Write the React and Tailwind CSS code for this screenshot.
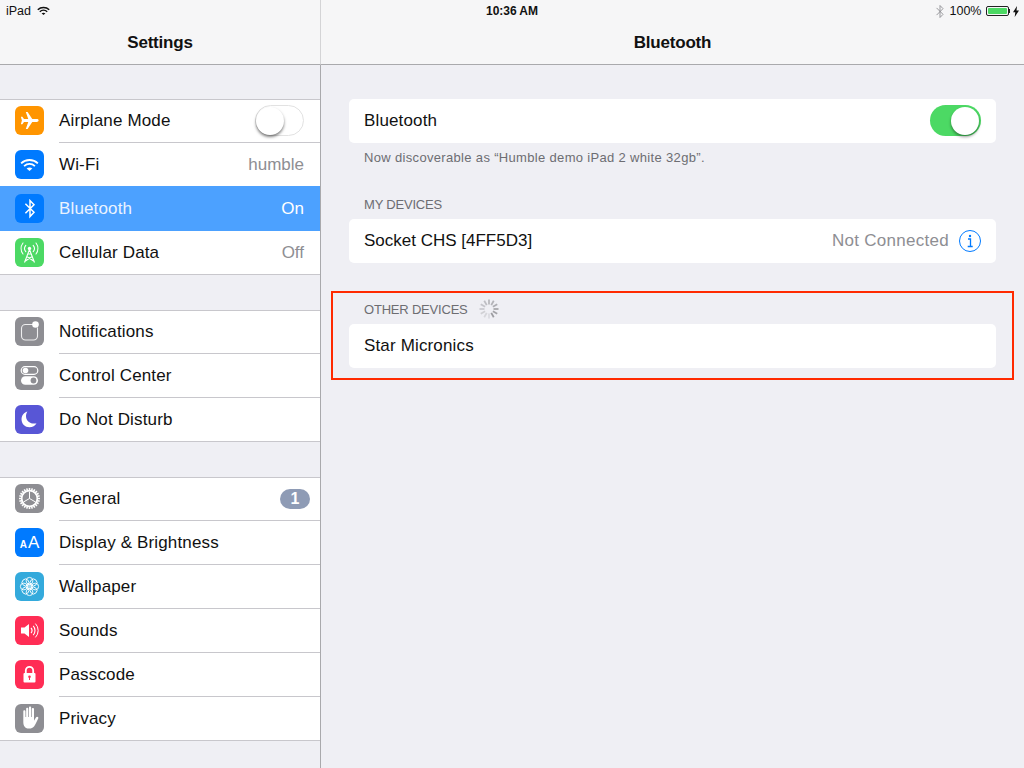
import React from "react";

const Wifi = ({ className, color = "#fff", w = 1.9 }) => (
  <svg className={className} viewBox="0 0 20 14" fill="none" stroke={color} strokeLinecap="butt">
    <path d="M1.200 5.200C6 .6 14 .6 18.800 5.200" strokeWidth={w} />
    <path d="M4.300 8.100C7.600 5.100 12.400 5.100 15.700 8.100" strokeWidth={w} />
    <path d="M10 13.200 7 10.600C8.700 9.300 11.300 9.300 13 10.600Z" fill={color} stroke="none" />
  </svg>
);

const BluetoothGlyph = ({ className, color = "#fff", w = 1.5 }) => (
  <svg className={className} viewBox="0 0 12 20" fill="none" stroke={color} strokeWidth={w}>
    <path d="M1.400 5.200 10 13.800 6 18V2l4 4.200-8.600 8.600" strokeLinejoin="miter" />
  </svg>
);

const Plane = () => (
  <svg className="w-[19px] h-[19px]" viewBox="0 0 20 20" fill="#fff">
    <path d="M19.600 10c0-1-1-1.500-2-1.500h-4.700L8 1H6.100l2.600 7.500H4.200L2.500 6.100H.9L2 10 .9 13.900h1.600l1.700-2.400h4.500L6.100 19H8l4.900-7.500h4.700c1 0 2-.5 2-1.500z" />
  </svg>
);

const Cell = () => (
  <svg className="w-[25px] h-[25px]" viewBox="0 0 25 25" fill="none" stroke="#fff" strokeWidth="1.100">
    <circle cx="12.500" cy="8.500" r="1.700" fill="#fff" stroke="none" />
    <path d="M12.500 9.500 7.500 22.500M12.500 9.500l5 13M9.800 16.500l6.800 4.500M15.200 16.500l-6.800 4.500M10.800 14h3.400" />
    <path d="M8.800 5.300a5 5 0 0 0 0 6.400M16.200 5.300a5 5 0 0 1 0 6.400M6 3a9 9 0 0 0 0 11M19 3a9 9 0 0 1 0 11" strokeLinecap="round" />
  </svg>
);

const Notif = () => (
  <svg className="w-[29px] h-[29px]" viewBox="0 0 29 29" fill="none">
    <path d="M19 7.500H10.500a4 4 0 0 0-4 4V19a4 4 0 0 0 4 4h8a4 4 0 0 0 4-4v-8.500" stroke="#fff" strokeOpacity=".85" strokeWidth="1.100" />
    <circle cx="20.500" cy="7.500" r="3.300" fill="#fff" />
  </svg>
);

const Control = () => (
  <svg className="w-[29px] h-[29px]" viewBox="0 0 29 29" fill="none">
    <rect x="6.200" y="5.700" width="16.600" height="7.600" rx="3.800" stroke="#fff" strokeWidth="1.200" />
    <circle cx="10.500" cy="9.500" r="2.800" fill="#fff" />
    <rect x="6" y="15.200" width="17" height="8.600" rx="4.300" fill="#fff" />
    <circle cx="18.500" cy="19.500" r="2.900" fill="#8e8e93" />
  </svg>
);

const Moon = () => (
  <svg className="w-[29px] h-[29px]" viewBox="0 -0.500 31 31" fill="#fff">
    <path d="M13.200 6.500C9.300 7.700 7 11 7 15c0 4.700 3.800 8.300 8.500 8.300 3.300 0 6-1.600 7.500-4.200-5.600 1.200-10.900-1.900-11.200-7.100-.1-2.100.4-3.900 1.400-5.500z" />
  </svg>
);

const Gear = () => {
  const teeth = Array.from({ length: 24 }, (_, i) => i * 15);
  return (
    <svg className="w-[29px] h-[29px]" viewBox="0 0 29 29" fill="none" stroke="#fff">
      {teeth.map((a) => (
        <path key={a} d="M14.500 4v3" strokeWidth="1.600" transform={`rotate(${a} 14.500 14.500)`} />
      ))}
      <circle cx="14.500" cy="14.500" r="7.800" strokeWidth="1.700" />
      <path d="M14.500 14.500V7.500M14.500 14.500l6 3.500M14.500 14.500l-6 3.500" strokeWidth="1" />
    </svg>
  );
};

const Flower = () => {
  const a = [0, 45, 90, 135, 180, 225, 270, 315];
  return (
    <svg className="w-[29px] h-[29px]" viewBox="0 0 29 29" fill="none" stroke="#fff" strokeWidth=".9">
      {a.map((d) => (
        <circle key={d} cx="14.500" cy="8.800" r="3.400" transform={`rotate(${d} 14.500 14.500)`} />
      ))}
      <circle cx="14.500" cy="14.500" r="2.500" fill="#fff" fillOpacity=".5" />
    </svg>
  );
};

const Sound = () => (
  <svg className="w-[29px] h-[29px]" viewBox="0 0 29 29" fill="none" stroke="#fff">
    <path d="M6 11.500h3.500L14 8v13l-4.500-3.500H6z" fill="#fff" stroke="none" />
    <path d="M16 12a3.500 3.500 0 0 1 0 5" strokeWidth="1.200" />
    <path d="M18.200 9.800a7 7 0 0 1 0 9.400" strokeWidth="1.100" />
    <path d="M20.400 7.600a10 10 0 0 1 0 13.800" strokeWidth="1" />
  </svg>
);

const Lock = () => (
  <svg className="w-[29px] h-[29px]" viewBox="0 0 29 29">
    <path d="M10.800 13.500v-3a3.700 3.700 0 0 1 7.400 0v3" fill="none" stroke="#fff" strokeWidth="1.800" />
    <rect x="8.500" y="13" width="12" height="9.500" rx="1" fill="#fff" />
    <circle cx="14.500" cy="16.800" r="1.300" fill="#ff2d55" />
    <rect x="14" y="17" width="1" height="3" fill="#ff2d55" />
  </svg>
);

const Hand = () => (
  <svg className="w-[29px] h-[29px]" viewBox="1 3 25.500 25.500" fill="#fff">
    <path d="M8.300 9.500c0-1.300 1.900-1.300 1.900 0v5h.6V7.200c0-1.300 1.900-1.300 1.900 0v7.300h.6V6.200c0-1.300 1.900-1.300 1.900 0v8.300h.6V7.500c0-1.300 1.900-1.300 1.900 0v10.300l1.700-3c.8-1.400 2.700-.5 2 1-1.100 2.200-2.200 5-3.500 6.700-1.100 1.500-2.600 2-4.500 2-4.300 0-5.100-3.200-5.100-6z" />
  </svg>
);

const Row = ({ icon, bg, label, value, sel, h, top = "mt-[7px]", sep = true, badge, toggle }) => (
  <div className={`flex items-start ${h} ${sel ? "bg-[#4ca1ff]" : "bg-white"} pl-[15px]`}>
    <div className={`w-[29px] h-[29px] shrink-0 rounded-[6px] flex items-center justify-center overflow-hidden ${top} ${bg}`}>{icon}</div>
    <div className={`ml-[15px] flex-1 h-full flex items-center pr-[16px] ${sep ? "border-b border-[#c8c7cc]" : ""}`}>
      <span className={`text-[17px] tracking-[0.15px] flex-1 ${sel ? "text-[#eaf3ff]" : "text-[#111]"}`}>{label}</span>
      {value && <span className={`text-[17px] ${sel ? "text-white" : "text-[#8e8e93]"}`}>{value}</span>}
      {badge && (
        <span className="-mr-[6px] w-[30px] h-[20px] rounded-full bg-[#8e9bb5] text-white text-[16px] font-bold leading-[20px] text-center">{badge}</span>
      )}
      {toggle && (
        <span className="-mt-[1px] w-[49px] h-[31px] rounded-full border border-[#e2e2e2] bg-white flex items-center">
          <span className="w-[28px] h-[28px] rounded-full bg-white shadow-[0_2px_3px_rgba(0,0,0,0.5)]" />
        </span>
      )}
    </div>
  </div>
);

const Group = ({ className, children }) => (
  <div className={`border-y border-[#c8c7cc] ${className}`}>{children}</div>
);

const Spinner = () => (
  <svg className="w-[22px] h-[22px]" viewBox="0 0 22 22" stroke="#8e8e93" strokeWidth="1.800" strokeLinecap="butt">
    {Array.from({ length: 12 }, (_, i) => (
      <path key={i} d="M11 1.500V6.500" transform={`rotate(${i * 30} 11 11)`} strokeOpacity={0.2 + ((i + 6) % 12) * 0.06} />
    ))}
  </svg>
);

const Info = () => (
  <svg className="w-[22px] h-[22px]" viewBox="0 0 22 22" fill="none">
    <circle cx="11" cy="11" r="10.500" stroke="#007aff" strokeWidth="1" />
    <circle cx="11" cy="6" r="1.200" fill="#007aff" />
    <path d="M9 9h2.500v7.500M8.700 16.500h5" stroke="#007aff" strokeWidth="1.300" />
  </svg>
);

const Card = ({ children }) => (
  <div className="h-[44px] rounded-[5px] bg-white flex items-center pl-[15px] pr-[15px] text-[17px] text-[#111]">{children}</div>
);

const Label = ({ children }) => (
  <div className="px-[15px] text-[13px] leading-[16px] tracking-[-0.2px] text-[#6d6d72] uppercase">{children}</div>
);

export default function App() {
  return (
    <div className="w-[1024px] h-[768px] overflow-hidden flex bg-[#efeff4] font-['Liberation_Sans',Arial,sans-serif]">
      <aside className="w-[321px] h-full shrink-0 flex flex-col">
        <header className="h-[65px] bg-[#f6f6f7] border-b border-[#a9a9ac] border-r border-r-[#d4d4d6]">
          <div className="h-[22px] pl-[6px] flex items-center gap-[6px] text-[12.500px] text-[#111]">
            <span>iPad</span>
            <Wifi className="w-[13px] h-[10px]" color="#111" w={2.300} />
          </div>
          <div className="mt-[9px] text-center text-[17px] leading-[24px] font-bold tracking-[-0.2px] text-[#111]">Settings</div>
        </header>
        <div className="flex-1 border-r border-[#a9a9ac]">
          <Group className="mt-[34px]">
            <Row h="h-[43px]" top="mt-[6px]" bg="bg-[#ff9500]" icon={<Plane />} label="Airplane Mode" toggle />
            <Row h="h-[43px]" sep={false} bg="bg-[#007aff]" icon={<Wifi className="w-[19px] h-[14px]" />} label="Wi-Fi" value="humble" />
            <Row h="h-[45px]" top="mt-[8px]" sep={false} sel bg="bg-[#007aff]" icon={<BluetoothGlyph className="w-[12px] h-[21px]" />} label="Bluetooth" value="On" />
            <Row h="h-[43px]" sep={false} bg="bg-[#4cd964]" icon={<Cell />} label="Cellular Data" value="Off" />
          </Group>
          <Group className="mt-[35px]">
            <Row h="h-[43px]" top="mt-[6px]" bg="bg-[#8e8e93]" icon={<Notif />} label="Notifications" />
            <Row h="h-[44px]" bg="bg-[#8e8e93]" icon={<Control />} label="Control Center" />
            <Row h="h-[43px]" sep={false} bg="bg-[#5856d6]" icon={<Moon />} label="Do Not Disturb" />
          </Group>
          <Group className="mt-[35px]">
            <Row h="h-[43px]" top="mt-[6px]" bg="bg-[#8e8e93]" icon={<Gear />} label="General" badge="1" />
            <Row h="h-[44px]" bg="bg-[#007aff]" icon={<span className="text-white leading-none flex items-baseline gap-[1px]"><span className="text-[10px] font-bold">A</span><span className="text-[17px]">A</span></span>} label="Display & Brightness" />
            <Row h="h-[44px]" bg="bg-[#34aadc]" icon={<Flower />} label="Wallpaper" />
            <Row h="h-[44px]" bg="bg-[#ff2d55]" icon={<Sound />} label="Sounds" />
            <Row h="h-[44px]" bg="bg-[#ff2d55]" icon={<Lock />} label="Passcode" />
            <Row h="h-[43px]" sep={false} bg="bg-[#8e8e93]" icon={<Hand />} label="Privacy" />
          </Group>
        </div>
      </aside>
      <main className="flex-1 flex flex-col">
        <header className="h-[65px] bg-[#f6f6f7] border-b border-[#a9a9ac]">
          <div className="h-[22px] flex items-center pr-[5px] text-[12px] text-[#111]">
            <span className="ml-[165px] w-[52px] text-center font-bold text-[12px] tracking-[-0.05px] whitespace-nowrap">10:36 AM</span>
            <div className="ml-auto flex items-center">
              <BluetoothGlyph className="w-[10px] h-[15px]" color="#8e8e93" w={1.200} />
              <span className="ml-[5px] text-[12.500px]">100%</span>
              <span className="ml-[4px] w-[23px] h-[10px] border border-[#222] rounded-[2px] p-[1px] flex">
                <span className="flex-1 bg-[#4cd964] rounded-[1px]" />
              </span>
              <span className="w-[1.500px] h-[4px] bg-[#222]" />
              <svg className="ml-[3px] w-[6px] h-[11px]" viewBox="0 0 6 11" fill="#111"><path d="M4 0 0 6.300h2.300L1.700 11 6 4.500H3.500z" /></svg>
            </div>
          </div>
          <div className="mt-[9px] text-center text-[17px] leading-[24px] font-bold tracking-[-0.2px] text-[#111]">Bluetooth</div>
        </header>
        <div className="px-[28px] pt-[34px]">
          <Card>
            <span className="flex-1 tracking-[0.15px]">Bluetooth</span>
            <span className="-mt-[1px] w-[51px] h-[31px] rounded-full bg-[#4cd964] flex items-center justify-end pr-[2px]">
              <span className="w-[28px] h-[28px] rounded-full bg-white shadow-[0_2px_3px_rgba(0,0,0,0.4)]" />
            </span>
          </Card>
          <div className="mt-[7px] px-[15px] text-[13px] leading-[16px] tracking-[0.33px] text-[#6d6d72]">Now discoverable as “Humble demo iPad 2 white 32gb”.</div>
          <div className="mt-[31px]"><Label>My Devices</Label></div>
          <div className="mt-[6px]">
            <Card>
              <span className="flex-1">Socket CHS [4FF5D3]</span>
              <span className="tracking-[0.28px] text-[#8e8e93]">Not Connected</span>
              <span className="ml-[10px] flex"><Info /></span>
            </Card>
          </div>
          <section className="mt-[28px] -mx-[18px] px-[16px] h-[89px] border-2 border-[#ff2a00]">
            <div className="h-[31px] pt-[2px] flex items-center">
              <Label>Other Devices</Label>
              <span className="-ml-[5px] -mt-[2px] flex"><Spinner /></span>
            </div>
            <Card><span className="tracking-[0.15px]">Star Micronics</span></Card>
          </section>
        </div>
      </main>
    </div>
  );
}
